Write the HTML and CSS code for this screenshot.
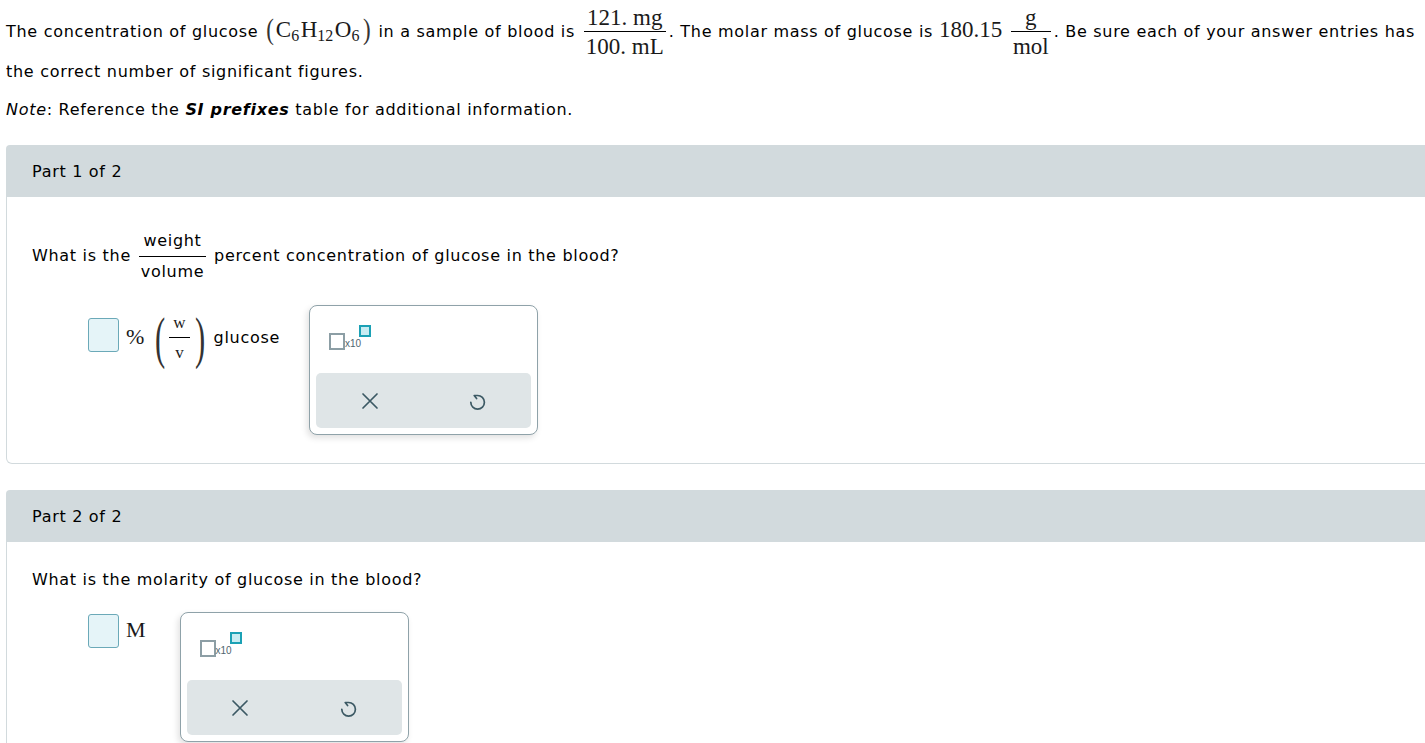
FILE: index.html
```html
<!DOCTYPE html>
<html lang="en">

<head>
    <meta charset="UTF-8">
    <meta name="viewport" content="width=device-width, initial-scale=1.0">
    <title>Glucose concentration</title>
    <link rel="stylesheet" href="styles.css">
</head>

<body>
    <div class="page">
        <p class="stem">The concentration of glucose <span class="math chem"><span class="paren">(</span>C<sub>6</sub>H<sub>12</sub>O<sub>6</sub><span class="paren">)</span></span> in a sample of blood is <span class="math frac"><span class="num">121. mg</span><span class="den">100. mL</span></span>. The molar mass of glucose is <span class="math">180.15</span> <span class="math frac"><span class="num">g</span><span class="den">mol</span></span>. Be sure each of your answer entries has the correct number of significant figures.</p>

        <p class="note"><i>Note</i>: Reference the <b><i>SI prefixes</i></b> table for additional information.</p>

        <!-- part 1 -->
        <section class="part">
            <div class="part-head">Part 1 of 2</div>
            <div class="part-body">
                <p class="question question-frac">What is the <span class="frac frac-sans"><span class="num">weight</span><span class="den">volume</span></span> percent concentration of glucose in the blood?</p>

                <div class="answer-row">
                    <div class="expr expr-tall">
                        <span class="box box-up"></span>
                        <span class="math unit">%</span>
                        <span class="math big-paren">(</span>
                        <span class="math frac frac-small"><span class="num">w</span><span class="den">v</span></span>
                        <span class="math big-paren big-paren-close">)</span>
                        <span class="word">glucose</span>
                    </div>

                    <div class="palette">
                        <div class="sci">
                            <span class="sci-base"></span><span class="sci-x">x10</span><span class="sci-exp"></span>
                        </div>
                        <div class="tools">
                            <button class="tool" type="button">
                                <svg width="18" height="18" viewBox="0 0 18 18"><path d="M2 2 L16 16 M16 2 L2 16" /></svg>
                            </button>
                            <button class="tool" type="button">
                                <svg width="18" height="18" viewBox="0 0 18 18"><path d="M2.8 10.3 A6.8 6.8 0 1 0 9.5 3.5 H6.2 L8.6 6.6" /></svg>
                            </button>
                        </div>
                    </div>
                </div>
            </div>
        </section>

        <!-- part 2 -->
        <section class="part">
            <div class="part-head">Part 2 of 2</div>
            <div class="part-body part-body-plain">
                <p class="question">What is the molarity of glucose in the blood?</p>

                <div class="answer-row">
                    <div class="expr">
                        <span class="box"></span>
                        <span class="math unit unit-end">M</span>
                    </div>

                    <div class="palette">
                        <div class="sci">
                            <span class="sci-base"></span><span class="sci-x">x10</span><span class="sci-exp"></span>
                        </div>
                        <div class="tools">
                            <button class="tool" type="button">
                                <svg width="18" height="18" viewBox="0 0 18 18"><path d="M2 2 L16 16 M16 2 L2 16" /></svg>
                            </button>
                            <button class="tool" type="button">
                                <svg width="18" height="18" viewBox="0 0 18 18"><path d="M2.8 10.3 A6.8 6.8 0 1 0 9.5 3.5 H6.2 L8.6 6.6" /></svg>
                            </button>
                        </div>
                    </div>
                </div>
            </div>
        </section>
    </div>
</body>

</html>
```

FILE: styles.css
```css
body {
    margin: 0;
    overflow-x: hidden;
    background: #fff;
    color: #000;
    font-family: "DejaVu Sans", Verdana, sans-serif;
    font-size: 16px;
    letter-spacing: 0.7px;
}

.page {
    padding: 6px 0 0 6px;
}

.stem {
    margin: 0;
    line-height: 27px;
}

.note {
    margin: 0;
    padding-top: 10px;
    line-height: 30px;
}

/* math bits */
.math {
    font-family: "Liberation Serif", "Times New Roman", serif;
    font-size: 23px;
    letter-spacing: 0;
    color: #1a1a1a;
}

.math sub {
    font-size: 16px;
    vertical-align: -4px;
    line-height: 0;
    padding-right: 1.5px;
}

.chem .paren {
    display: inline-block;
    transform: scale(1, 1.25);
    color: #333;
    padding: 0 2px;
}

.frac {
    display: inline-flex;
    flex-direction: column;
    text-align: center;
    vertical-align: middle;
    line-height: 1;
    padding: 0 3px;
}

.frac .num {
    padding: 0 2px 2px;
    border-bottom: 1px solid #000;
}

.frac .den {
    padding: 3px 2px 0;
}

.frac-sans {
    font-size: 16px;
    padding: 0 2px;
}

.frac-sans .num {
    padding: 0 2px 7px;
}

.frac-sans .den {
    padding: 7px 2px 0;
}

/* parts */
.part {
    margin: 20px -30px 26px 0;
}

.part + .part {
    margin-top: 0;
}

.part-head {
    height: 52px;
    line-height: 50px;
    padding: 2px 26px 0;
    box-sizing: border-box;
    background: #d2dadd;
    border-radius: 4px 0 0 0;
}

.part-body {
    padding: 26px 25px 28px;
    border: 1px solid #d2dadd;
    border-top: 0;
    border-radius: 0 0 0 6px;
}

.part-body-plain {
    padding-top: 28px;
}

.question {
    margin: 0;
    line-height: 20px;
}

.question-frac {
    padding: 10px 0 3px;
}

.answer-row {
    display: flex;
    align-items: flex-start;
    margin-top: 22px;
    padding-left: 56px;
}

.expr {
    display: flex;
    align-items: center;
    margin-top: 2px;
}

.expr-tall {
    margin-top: 9px;
}

.box {
    width: 29px;
    height: 32px;
    background: #e5f4f8;
    border: 1.5px solid #6ba9b8;
    border-radius: 3px;
}

.box-up {
    margin-top: -5px;
}

.unit {
    margin-left: 7px;
    font-size: 22px;
}

.unit-end {
    margin-right: 5px;
}

.expr .unit {
    margin-top: -2px;
}

.big-paren {
    display: inline-block;
    font-size: 36px;
    line-height: 1;
    transform: scale(0.85, 1.6);
    color: #333;
    margin-left: 10px;
}

.big-paren-close {
    margin-left: 4px;
}

.frac-small {
    font-size: 17px;
    padding: 0;
    margin-left: 3px;
}

.frac-small .num {
    padding: 0 4px 6px;
}

.frac-small .den {
    padding: 6px 4px 0;
}

.word {
    margin-left: 8px;
}

/* answer tool palette */
.palette {
    width: 229px;
    height: 130px;
    margin-left: 29px;
    border: 1px solid #8fa2a9;
    border-radius: 8px;
    box-shadow: -2px 3px 6px rgba(0, 0, 0, 0.12);
    background: #fff;
    display: flex;
    flex-direction: column;
    justify-content: space-between;
    padding: 0 6px 6px;
    box-sizing: border-box;
}

.sci {
    display: flex;
    align-items: flex-start;
    height: 67px;
    padding: 19px 0 0 13px;
    box-sizing: border-box;
    letter-spacing: 0;
}

.sci-base {
    width: 12px;
    height: 13px;
    margin-top: 8px;
    border: 2px solid #8c9ea5;
}

.sci-x {
    font-family: "Liberation Sans", Arial, sans-serif;
    font-size: 10px;
    color: #4f6670;
    margin-top: 13px;
}

.sci-exp {
    width: 8px;
    height: 8px;
    margin-left: -2px;
    border: 2px solid #1ba1b5;
    background: #c8ecf2;
}

.tools {
    display: flex;
    height: 55px;
    background: #dfe5e7;
    border-radius: 5px;
}

.tool {
    flex: 1;
    border: 0;
    background: none;
    padding: 0;
    display: flex;
    align-items: center;
    justify-content: center;
}

.tool svg {
    fill: none;
    stroke: #3c5964;
    stroke-width: 1.7;
    stroke-linecap: round;
    stroke-linejoin: round;
}
```
